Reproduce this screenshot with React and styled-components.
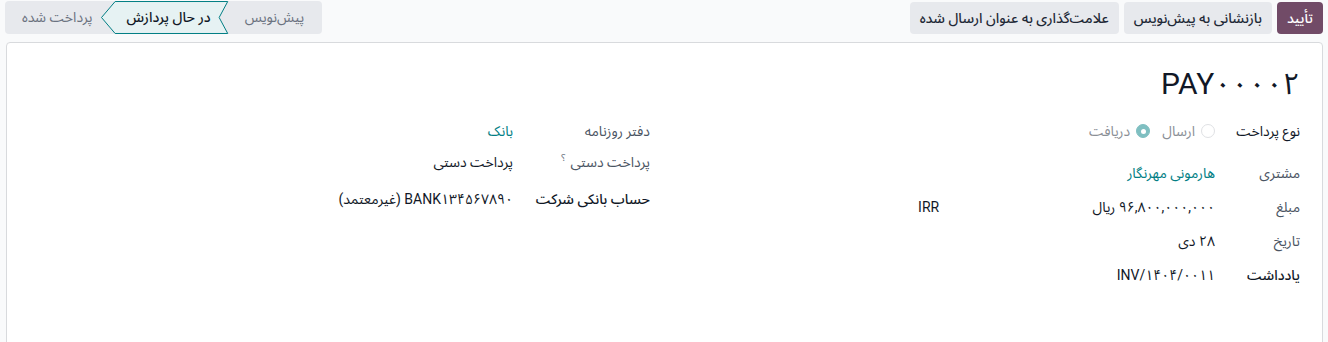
import React from "react";
import styled, { createGlobalStyle } from "styled-components";

const Global = createGlobalStyle`
  html, body { margin: 0; padding: 0; }
  body {
    background: #f9fafb;
    font-family: "Roboto", "Noto Sans", "Noto Sans Arabic", "DejaVu Sans", sans-serif;
    font-size: 14px;
    color: #111827;
  }
`;

const Page = styled.div`
  direction: rtl;
  width: 1328px;
  height: 342px;
  overflow: hidden;
`;

const ControlBar = styled.div`
  display: flex;
  justify-content: space-between;
  align-items: flex-start;
  padding: 1px 5px 0 5px;
  height: 33px;
`;

const Actions = styled.div`
  display: flex;
  gap: 5px;
  padding-top: 1px;
`;

const Button = styled.button`
  font-family: inherit;
  font-size: 14px;
  font-weight: 500;
  height: 32px;
  padding: 0 10px;
  border: none;
  border-radius: 4px;
  background: ${(p) => (p.$primary ? "#714b67" : "#e7e9ed")};
  color: ${(p) => (p.$primary ? "#ffffff" : "#1f2937")};
  cursor: pointer;
  white-space: nowrap;
`;

const StatusBar = styled.div`
  display: flex;
  align-items: stretch;
  height: 33px;
  background: #e7e9ed;
  border-radius: 4px;
`;

const Step = styled.div`
  position: relative;
  display: flex;
  align-items: center;
  white-space: nowrap;
  font-size: 14px;
  padding: ${(p) => p.$pad};
  color: ${(p) => (p.$active ? "#111827" : "#6b7280")};
  font-weight: ${(p) => (p.$active ? 500 : 400)};
`;

const StepLabel = styled.span`
  position: relative;
  z-index: 1;
`;

const StepShape = styled.svg`
  position: absolute;
  inset: 0;
  width: 100%;
  height: 100%;
  overflow: visible;
`;

const Card = styled.div`
  margin: 8px 5px 0 6px;
  background: #ffffff;
  border: 1px solid #d8dadd;
  border-radius: 4px;
  min-height: 320px;
  padding: 20px 22px 0 23px;
`;

const Title = styled.h1`
  margin: 0;
  font-size: 30px;
  font-weight: 400;
  line-height: 42px;
  color: #111827;
`;

const Groups = styled.div`
  display: grid;
  grid-template-columns: 1fr 1fr;
  column-gap: 30px;
  margin-top: 16px;
`;

const Group = styled.div`
  display: flex;
  flex-direction: column;
`;

const Row = styled.div`
  display: grid;
  grid-template-columns: ${(p) => p.$labelWidth}px 1fr;
  align-items: start;
  height: ${(p) => p.$h || 34}px;
`;

const Label = styled.div`
  line-height: 20px;
  font-weight: ${(p) => (p.$strong ? 500 : 400)};
  color: ${(p) => (p.$dark || p.$strong ? "#111827" : "#4b5563")};
  white-space: nowrap;
`;

const Help = styled.sup`
  color: #6b7280;
  font-size: 10px;
  line-height: 0;
  margin-right: 5px;
`;

const Value = styled.div`
  line-height: 20px;
  color: ${(p) => (p.$link ? "#017e84" : "#111827")};
  display: flex;
  align-items: center;
  white-space: nowrap;
`;

const Amount = styled.div`
  width: 51%;
`;

const Currency = styled.div`
  margin-right: 3px;
`;

const RadioGroup = styled.div`
  display: flex;
  align-items: center;
  gap: 12px;
  color: #8b8f96;
`;

const RadioItem = styled.label`
  display: flex;
  align-items: center;
  gap: 6px;
`;

const RadioDot = styled.span`
  width: 14px;
  height: 14px;
  border-radius: 50%;
  box-sizing: border-box;
  background: ${(p) => (p.$on ? "#7fbfc1" : "#ffffff")};
  border: 1px solid ${(p) => (p.$on ? "#7fbfc1" : "#dfe1e4")};
  display: flex;
  align-items: center;
  justify-content: center;
  &::after {
    content: "";
    width: 5px;
    height: 5px;
    border-radius: 50%;
    background: ${(p) => (p.$on ? "#ffffff" : "transparent")};
  }
`;

function ActiveShape() {
  return (
    <StepShape viewBox="0 0 126 32" preserveAspectRatio="none">
      <polygon
        points="14,0.5 125.5,0.5 117,16 125.5,31.5 14,31.5 0.5,16"
        fill="#e6f2f3"
        stroke="#017e84"
        strokeWidth="1"
        vectorEffect="non-scaling-stroke"
      />
    </StepShape>
  );
}

export default function App() {
  return (
    <Page>
      <Global />
      <ControlBar>
        <Actions>
          <Button $primary>تأیید</Button>
          <Button>بازنشانی به پیش‌نویس</Button>
          <Button>علامت‌گذاری به عنوان ارسال شده</Button>
        </Actions>
        <StatusBar>
          <Step $pad="0 18px 0 16px">
            <StepLabel>پیش‌نویس</StepLabel>
          </Step>
          <Step $active $pad="0 18px 0 25px">
            <ActiveShape />
            <StepLabel>در حال پردازش</StepLabel>
          </Step>
          <Step $pad="0 9px 0 17px">
            <StepLabel>پرداخت شده</StepLabel>
          </Step>
        </StatusBar>
      </ControlBar>
      <Card>
        <Title>PAY۰۰۰۰۲</Title>
        <Groups>
          <Group>
            <Row $labelWidth={85} $h={42}>
              <Label $dark>نوع پرداخت</Label>
              <Value>
                <RadioGroup>
                  <RadioItem>
                    <RadioDot />
                    ارسال
                  </RadioItem>
                  <RadioItem>
                    <RadioDot $on />
                    دریافت
                  </RadioItem>
                </RadioGroup>
              </Value>
            </Row>
            <Row $labelWidth={85}>
              <Label>مشتری</Label>
              <Value $link>هارمونی مهرنگار</Value>
            </Row>
            <Row $labelWidth={85}>
              <Label>مبلغ</Label>
              <Value>
                <Amount>۹۶,۸۰۰,۰۰۰,۰۰۰ ریال</Amount>
                <Currency>IRR</Currency>
              </Value>
            </Row>
            <Row $labelWidth={85}>
              <Label>تاریخ</Label>
              <Value>۲۸ دی</Value>
            </Row>
            <Row $labelWidth={85}>
              <Label $strong>یادداشت</Label>
              <Value>INV/۱۴۰۴/۰۰۱۱</Value>
            </Row>
          </Group>
          <Group>
            <Row $labelWidth={137} $h={31}>
              <Label>دفتر روزنامه</Label>
              <Value $link>بانک</Value>
            </Row>
            <Row $labelWidth={137} $h={37}>
              <Label>
                پرداخت دستی<Help>؟</Help>
              </Label>
              <Value>پرداخت دستی</Value>
            </Row>
            <Row $labelWidth={137}>
              <Label $strong>حساب بانکی شرکت</Label>
              <Value>BANK۱۳۴۵۶۷۸۹۰ (غیرمعتمد)</Value>
            </Row>
          </Group>
        </Groups>
      </Card>
    </Page>
  );
}
